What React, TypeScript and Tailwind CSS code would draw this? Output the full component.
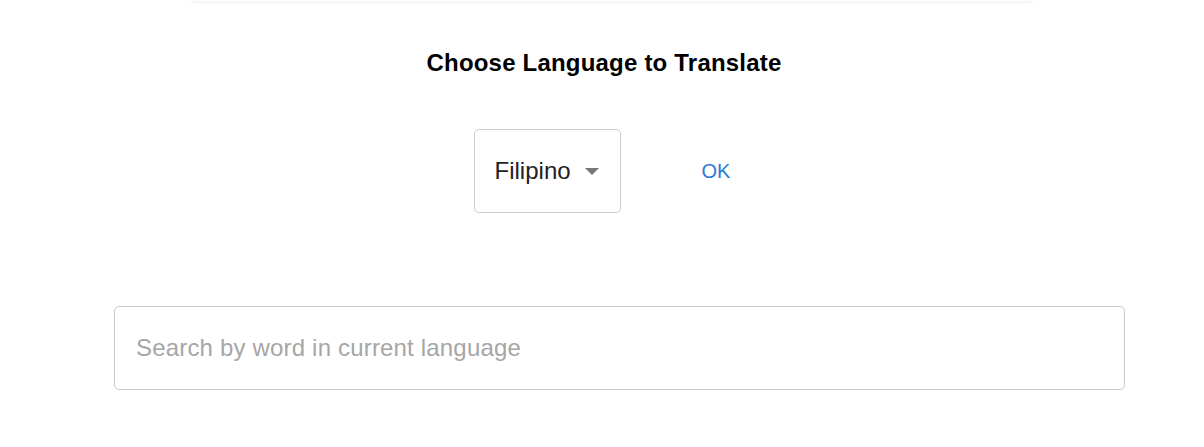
import React, { useState } from "react";

const languages = ["Filipino", "English", "Spanish", "French"];

const App: React.FC = () => {
  const [lang, setLang] = useState("Filipino");
  const [query, setQuery] = useState("");

  return (
    <div className="min-h-screen bg-white font-['Liberation_Sans',Arial,sans-serif] overflow-hidden">
      {/* card edge above the fold */}
      <div className="ml-[192px] mr-[172px] -mt-[10px] h-[11px] bg-white shadow-[0_1px_4px_rgba(0,0,0,0.07)]" />

      <h1 className="pt-[48px] pl-[4px] text-center text-[24px] font-bold leading-[28px] tracking-[0.2px] text-black">
        Choose Language to Translate
      </h1>

      <div className="mt-[52px] flex items-center justify-center gap-[81px]">
        <div className="relative h-[84px] w-[147px] rounded-[5px] border border-[#cccccc]">
          <select
            value={lang}
            onChange={(e) => setLang(e.target.value)}
            className="h-full w-full appearance-none bg-transparent pl-[20px] text-[24px] text-[#222222] outline-none"
          >
            {languages.map((l) => (
              <option key={l} value={l}>
                {l}
              </option>
            ))}
          </select>
          <span className="pointer-events-none absolute right-[21px] top-[38px] h-0 w-0 border-x-[7.5px] border-t-[7px] border-x-transparent border-t-[#777777]" />
        </div>
        <button className="text-[20px] text-[#2b7bd6]">OK</button>
      </div>

      <div className="mt-[93px] pl-[114px]">
        <input
          value={query}
          onChange={(e) => setQuery(e.target.value)}
          placeholder="Search by word in current language"
          className="h-[84px] w-[1011px] rounded-[5px] border border-[#c8c8c8] px-[21px] text-[24px] tracking-[0.18px] text-[#222222] outline-none placeholder:text-[#a6a6a6]"
        />
      </div>
    </div>
  );
};

export default App;
